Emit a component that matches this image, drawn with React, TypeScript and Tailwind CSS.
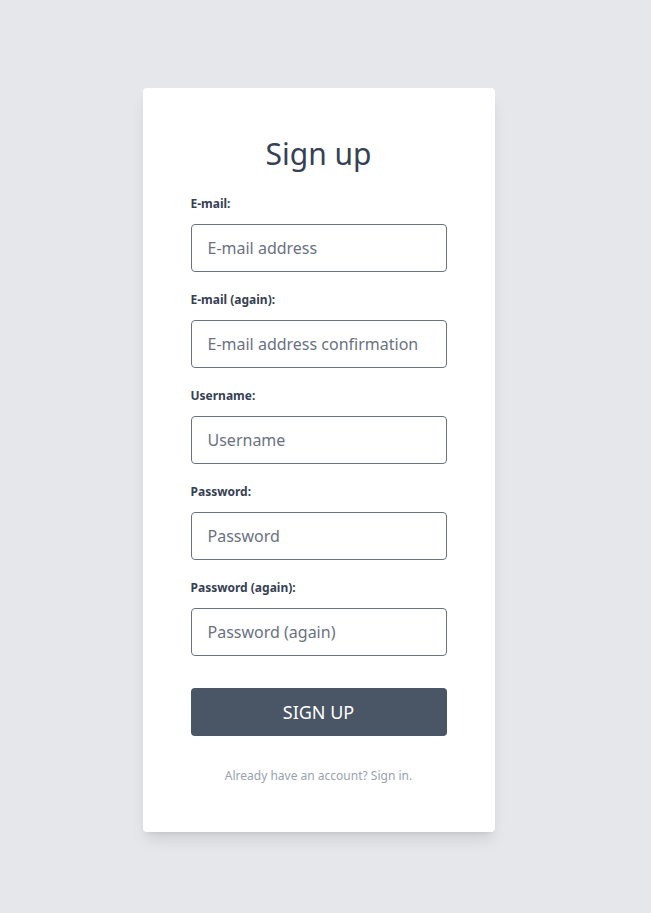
const fields = [
  { label: 'E-mail:', placeholder: 'E-mail address', type: 'email' },
  { label: 'E-mail (again):', placeholder: 'E-mail address confirmation', type: 'email' },
  { label: 'Username:', placeholder: 'Username', type: 'text' },
  { label: 'Password:', placeholder: 'Password', type: 'password' },
  { label: 'Password (again):', placeholder: 'Password (again)', type: 'password' },
]

export default function App() {
  return (
    <div className="min-h-screen bg-gray-200 flex justify-center pt-[88px] pb-20 pr-[14px] font-['Noto_Sans',sans-serif]">
      <div className="w-[352px] bg-white rounded shadow-lg px-12 pt-12 pb-12 h-fit">
        <h1 className="text-3xl text-gray-700 text-center mb-6">Sign up</h1>
        <form>
          {fields.map((f) => (
            <div key={f.label} className="mb-5">
              <label className="block text-xs font-bold text-gray-700 mb-3">{f.label}</label>
              <input
                type={f.type}
                placeholder={f.placeholder}
                className="block w-full h-12 px-4 border border-gray-500 rounded text-base text-gray-700 placeholder:text-gray-500 outline-none"
              />
            </div>
          ))}
          <button
            type="button"
            className="mt-3 w-full h-12 bg-gray-600 text-white text-lg uppercase rounded"
          >
            Sign up
          </button>
        </form>
        <p className="mt-8 text-xs text-gray-400 text-center">Already have an account? Sign in.</p>
      </div>
    </div>
  )
}
